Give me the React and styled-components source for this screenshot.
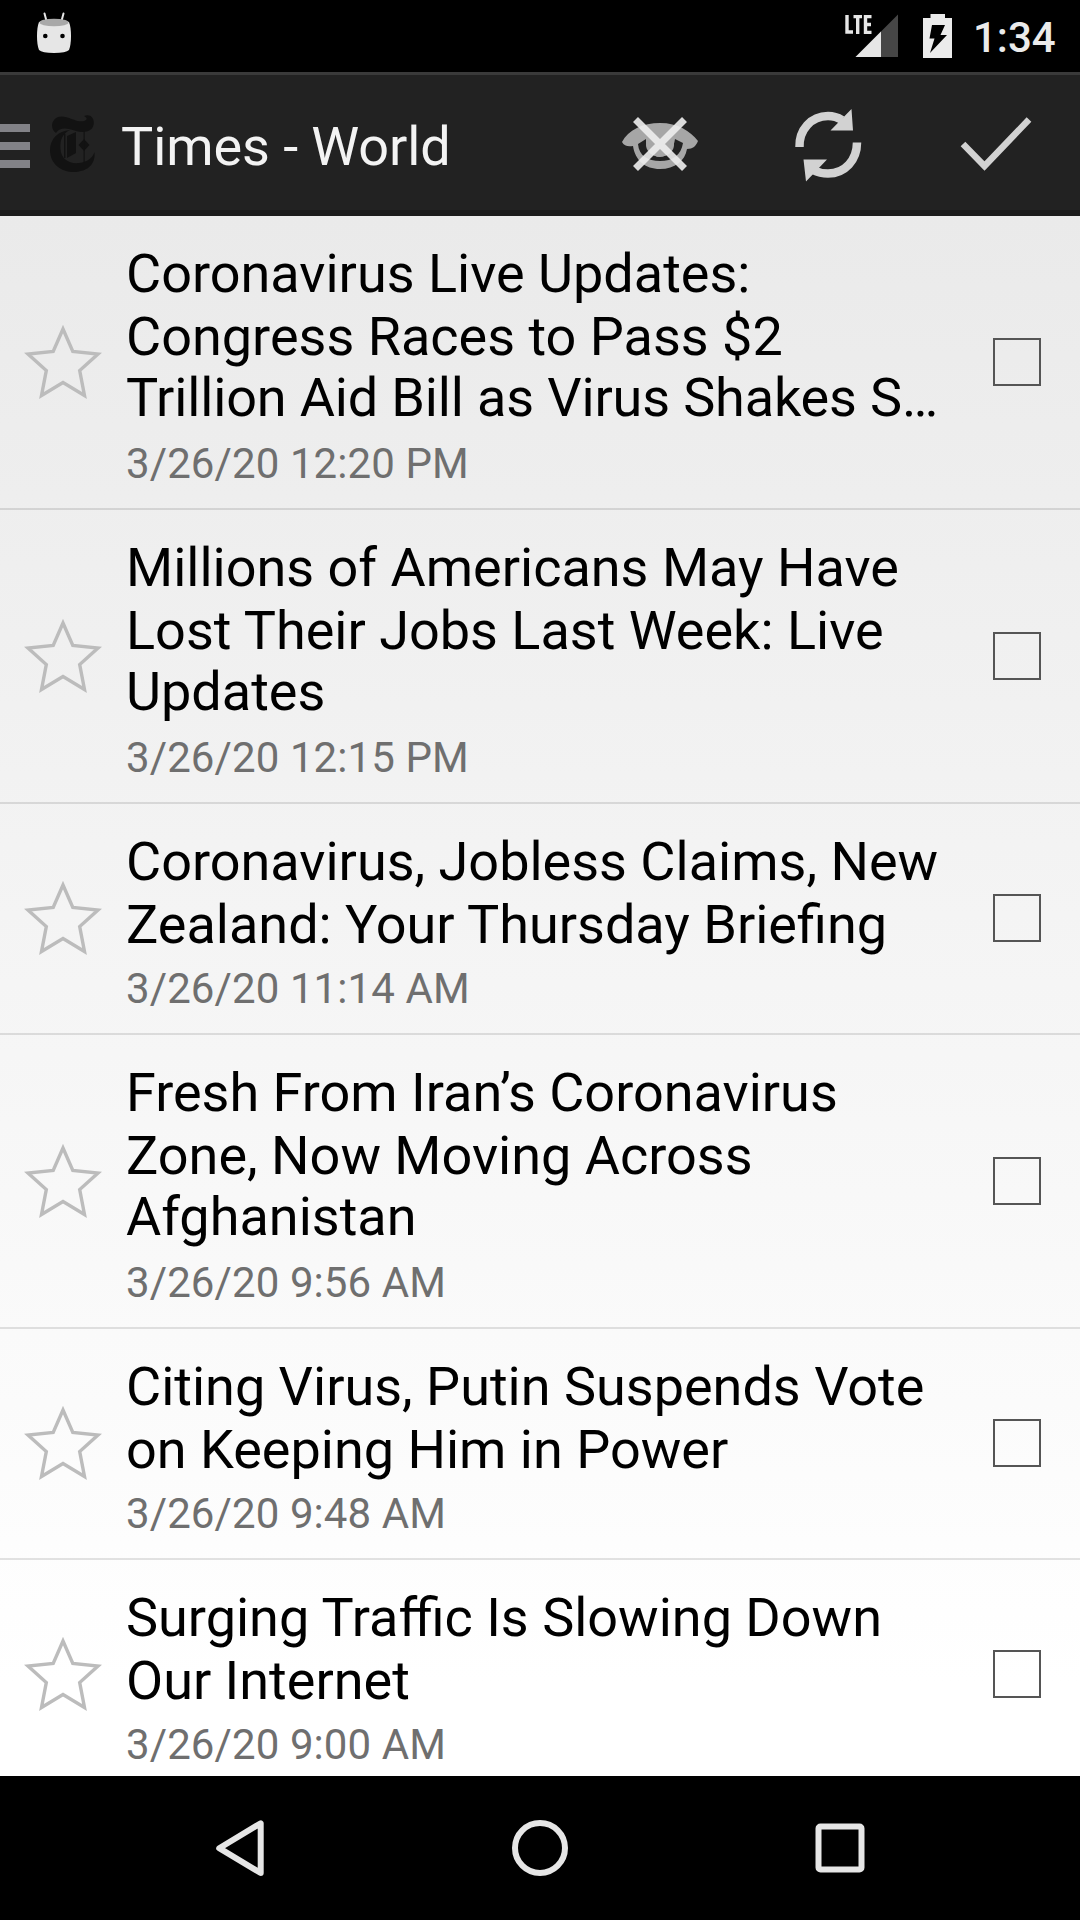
import React from "react";
import styled, { createGlobalStyle } from "styled-components";

const Global = createGlobalStyle`
  * { box-sizing: border-box; }
  body { margin: 0; background: #000; }
`;

const Screen = styled.div`
  width: 1080px;
  height: 1920px;
  display: flex;
  flex-direction: column;
  overflow: hidden;
  font-family: Roboto, "Noto Sans", sans-serif;
  color: #000;
`;

const StatusBar = styled.header`
  flex: 0 0 72px;
  display: flex;
  align-items: flex-start;
  background: #000;
  padding: 12px 24px 0 36px;
`;

const StatusGroup = styled.div`
  display: flex;
  margin-left: auto;
`;

const Clock = styled.time`
  width: 83px;
  margin-left: 19px;
  padding-top: 1px;
  font-size: 42px;
  line-height: 50px;
  font-weight: 500;
  color: #ebebeb;
  white-space: nowrap;
`;

const ActionBar = styled.div`
  flex: 0 0 144px;
  display: flex;
  align-items: center;
  background: #222;
  border-top: 3px solid #3a3a3a;
  border-bottom: 6px solid #1b1b1b;
  padding-top: 5px;
`;

const MenuButton = styled.div`
  width: 30px;
  height: 44px;
  margin-top: 2px;
  display: flex;
  flex-direction: column;
  justify-content: space-between;
`;

const MenuLine = styled.i`
  height: 8px;
  background: #828287;
`;

const FeedLogo = styled.svg`
  width: 48px;
  height: 60px;
  margin: 0 0 2px 20px;
`;

const BarTitle = styled.h1`
  margin: 0 auto 0 23px;
  padding-top: 4px;
  font-size: 54px;
  line-height: 64px;
  font-weight: 400;
  letter-spacing: -0.08px;
  color: #f3f3f3;
  white-space: nowrap;
`;

const Action = styled.svg`
  width: 168px;
  height: 96px;
`;

const List = styled.main`
  flex: 1;
  overflow: hidden;
  background: linear-gradient(#eaeaea, #ffffff 94%);
`;

const Row = styled.article`
  height: ${(p) => (p.$lines === 3 ? 294 : 231)}px;
  display: flex;
  border-bottom: 2px solid rgba(0, 0, 0, 0.11);
`;

const StarCell = styled.div`
  width: 126px;
  display: flex;
  align-items: center;
  padding: 0 0 ${(p) => (p.$lines === 3 ? 0 : 1)}px 21px;
`;

const Content = styled.div`
  flex: 1;
  padding-top: 26px;
`;

const Headline = styled.h2`
  margin: 0;
  font-size: 54px;
  font-weight: 400;
  white-space: nowrap;
`;

const Line = styled.span`
  display: block;
  height: ${(p) => (p.$i === 0 ? 63 : 61)}px;
  line-height: 63px;
  letter-spacing: ${(p) => (p.$cut ? "-0.15px" : "normal")};
`;

const DateText = styled.p`
  margin: ${(p) => (p.$lines === 3 ? 12 : 10)}px 0 0;
  font-size: 42px;
  line-height: 49px;
  letter-spacing: 0.1px;
  color: #6f6f6f;
  white-space: nowrap;
`;

const CheckCell = styled.div`
  width: 87px;
  display: flex;
  align-items: center;
  padding-bottom: ${(p) => (p.$lines === 3 ? 0 : 1)}px;
`;

const Checkbox = styled.div`
  width: 48px;
  height: 48px;
  border: 2px solid #555;
`;

const NavBar = styled.nav`
  flex: 0 0 144px;
  display: flex;
  justify-content: center;
  gap: 156px;
  align-items: center;
  background: #000;
`;

const NavIcon = styled.svg`
  width: 144px;
  height: 144px;
  fill: none;
  stroke: #e6e6e6;
  stroke-width: 6;
  stroke-linejoin: round;
`;

const items = [
  { date: "3/26/20 12:20 PM", lines: ["Coronavirus Live Updates:", "Congress Races to Pass $2", "Trillion Aid Bill as Virus Shakes S…"] },
  { date: "3/26/20 12:15 PM", lines: ["Millions of Americans May Have", "Lost Their Jobs Last Week: Live", "Updates"] },
  { date: "3/26/20 11:14 AM", lines: ["Coronavirus, Jobless Claims, New", "Zealand: Your Thursday Briefing"] },
  { date: "3/26/20 9:56 AM", lines: ["Fresh From Iran’s Coronavirus", "Zone, Now Moving Across", "Afghanistan"] },
  { date: "3/26/20 9:48 AM", lines: ["Citing Virus, Putin Suspends Vote", "on Keeping Him in Power"] },
  { date: "3/26/20 9:00 AM", lines: ["Surging Traffic Is Slowing Down", "Our Internet"] },
];

function Star() {
  return (
    <svg width="84" height="84" viewBox="0 0 84 84">
      <path
        d="M42 9L51.800 31.400L77 34L58.700 50.500L63.500 75.500L42 62.500L20.500 75.500L25.300 50.500L7 34L32.200 31.400Z"
        fill="none"
        stroke="#bcbcbc"
        strokeWidth="3.400"
      />
    </svg>
  );
}

function Entry({ item }) {
  const n = item.lines.length;
  return (
    <Row $lines={n}>
      <StarCell $lines={n}><Star /></StarCell>
      <Content>
        <Headline>
          {item.lines.map((t, i) => <Line key={t} $i={i} $cut={t.endsWith("…")}>{t}</Line>)}
        </Headline>
        <DateText $lines={n}>{item.date}</DateText>
      </Content>
      <CheckCell $lines={n}><Checkbox /></CheckCell>
    </Row>
  );
}

export default function App() {
  return (
    <>
      <Global />
      <Screen>
        <StatusBar>
          <svg width="36" height="42" viewBox="36 12 36 42">
            <path d="M44.500 13.500L46.500 21M63.500 13.500L61.500 21" stroke="#e6e6e6" strokeWidth="2" strokeLinecap="round" />
            <path d="M39 22Q54 16 69 22Q71 27 71 36Q71 45 69 50Q66 53 54 53Q42 53 39 50Q37 45 37 36Q37 27 39 22Z" fill="#e6e6e6" />
            <ellipse cx="54" cy="22.500" rx="14.500" ry="3.800" fill="#a8a8a8" />
            <circle cx="45.300" cy="36" r="2.300" fill="#000" />
            <circle cx="62.500" cy="36" r="2.300" fill="#000" />
          </svg>
          <StatusGroup>
            <svg width="110" height="48" viewBox="844 12 110 48">
              <path d="M855.500 57L898 14.500V57Z" fill="#464646" />
              <path d="M855.500 57L881 31.500V57Z" fill="#e6e6e6" />
              <path d="M847 15V32H853M853.500 16.600H862M857.700 16V34M871.500 16.600H865.500V32.400H871.500M865.500 24.500H871" fill="none" stroke="#e6e6e6" strokeWidth="3.400" />
              <path d="M923 18H930.500V14H945V18H952V58H923Z" fill="#ebebeb" />
              <path d="M932 25H945L940.500 35H947L930 53L934.500 38.500H929.500Z" fill="#000" />
            </svg>
            <Clock>1:34</Clock>
          </StatusGroup>
        </StatusBar>
        <ActionBar>
          <MenuButton><MenuLine /><MenuLine /><MenuLine /></MenuButton>
          <FeedLogo viewBox="50 114 48 60">
            <g fill="#121212">
              <path d="M84 116C91 113 95 119 93.500 125C92 132 84 133 76 131C68 129 61 126 56 133C50 129 51 120 58 117C66 114 76 123 84 121C87 120 88 118 84 116Z" />
              <path d="M70 130C62 134 60 140 60.500 149C61 159 69 164 79 163C88 162 93 157 94.500 152C96 166 85 172 74 172C61 172 50 164 50 150C50 139 58 131 70 130Z" />
              <path d="M67 136L76 132V153L67 158Z" />
              <path d="M84 139L89.500 145L84 151L78.500 145Z" />
              <path d="M64 134H65.500V158H64ZM83.500 131H84.700V163H83.500Z" />
            </g>
          </FeedLogo>
          <BarTitle>Times - World</BarTitle>
          <Action viewBox="576 97 168 96">
            <path fillRule="evenodd" fill="#a6a6a6" d="M622 142C628 130 643 123 660 123C678 123 690 131 698 141C696 146 693 149 687 149C685 161 675 169 660 169C645 169 635 160 633 146C628 147 624 146 622 142ZM638 144C639 156 648 161 660 161C673 161 681 155 683 143L675 139C674 148 668 157 660 157C652 157 645 149 646 139Z" />
            <ellipse cx="660" cy="145" rx="14" ry="11.500" fill="#a6a6a6" />
            <path d="M635.500 119.500L684.500 168.500M684.500 119.500L635.500 168.500" stroke="#eee" strokeOpacity=".9" strokeWidth="7" />
          </Action>
          <Action viewBox="744 97 168 96">
            <path d="M799.500 147C799 130 811 116 828 116C834 116 838 117.500 842 120M857 142.500C857 160 845 173.500 828 173.500C822 173.500 817 172 813 170" fill="none" stroke="#d2d2d2" strokeWidth="8.500" />
            <path d="M851.500 109L853 130.500H830.500Z M803.500 159.500H827L806 181.500Z" fill="#d2d2d2" />
          </Action>
          <Action viewBox="912 97 168 96">
            <path d="M963 144L984.500 166L1029 119.500" fill="none" stroke="#d2d2d2" strokeWidth="6.500" />
          </Action>
        </ActionBar>
        <List>
          {items.map((item) => <Entry key={item.date} item={item} />)}
        </List>
        <NavBar>
          <NavIcon viewBox="0 0 144 144"><path d="M92.700 47.300V97L51.200 72.200Z" /></NavIcon>
          <NavIcon viewBox="0 0 144 144"><circle cx="72" cy="72" r="25" /></NavIcon>
          <NavIcon viewBox="0 0 144 144"><rect x="50.500" y="50.500" width="43" height="43" rx="2" /></NavIcon>
        </NavBar>
      </Screen>
    </>
  );
}
